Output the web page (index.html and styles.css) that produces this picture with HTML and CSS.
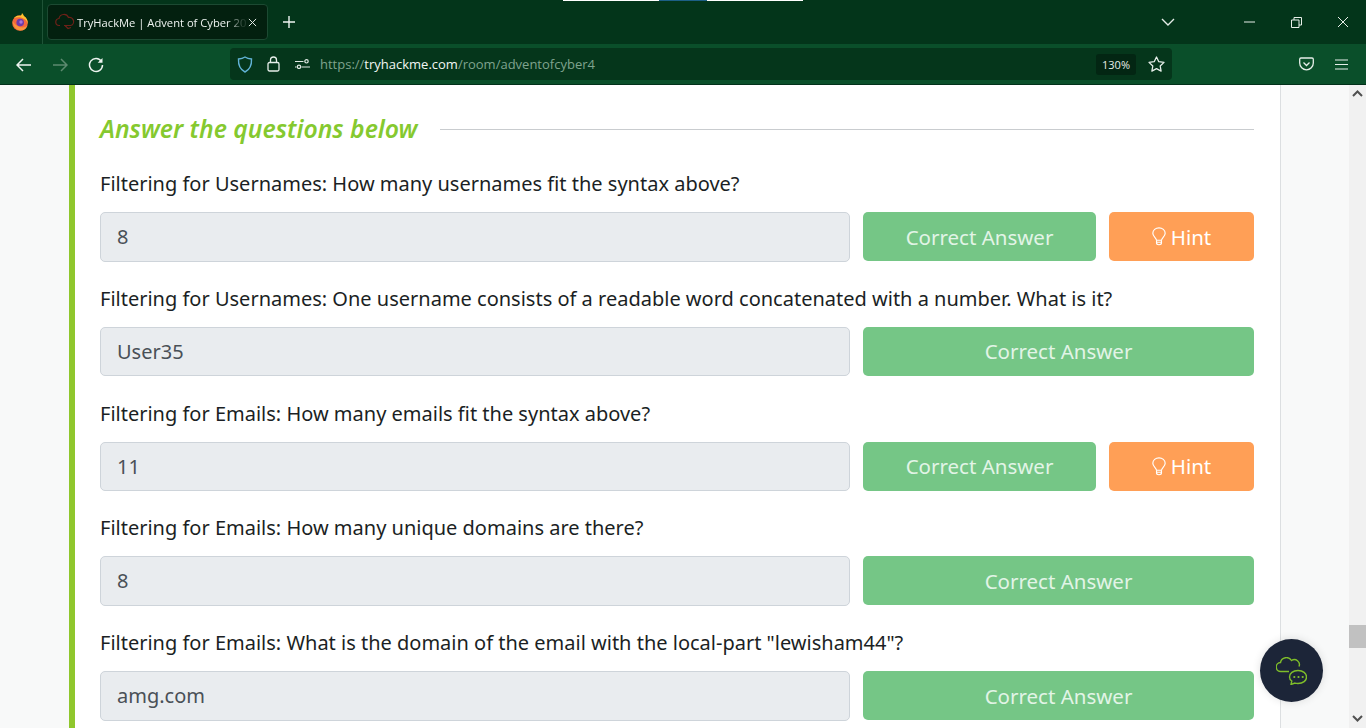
FILE: index.html
```html
<!DOCTYPE html>
<html lang="en">
<head>
    <meta charset="UTF-8">
    <title>TryHackMe | Advent of Cyber 2022</title>
    <link rel="stylesheet" href="styles.css">
</head>
<body>

<div class="top-strip"><span class="strip-white"></span><span class="strip-blue"></span><span class="strip-white"></span></div>

<header class="tabbar">
    <div class="app-menu">
        <svg width="16" height="18" viewBox="0 0 16 18">
            <circle cx="8" cy="10" r="7.800" fill="#f4683c"/>
            <path d="M.5 8c.5 5 4 9.500 8 9.500 3.500 0 6-2 7-5-2 2-5 2.500-8 1.500C5 13 2 11 .5 8z" fill="#f8963a"/>
            <path d="M2 5C4 2.500 7 2.500 8.500 3 9.500 2 10 1 10 0c1 1 1.500 2 2 3 2.500 1.500 4 4.500 3.800 8-.8-3-2.500-5-4.500-5.500C9 4 5 4 2 5z" fill="#ffc02e"/>
            <circle cx="8.200" cy="9.500" r="3.800" fill="#6d3aa8"/>
            <circle cx="9" cy="9" r="1.700" fill="#a878d8"/>
        </svg>
    </div>
    <div class="tab">
        <svg class="tab-icon" width="20" height="18" viewBox="0 0 20 18" fill="none" stroke="#6e2118" stroke-width="1.200">
            <path d="M5 12.500H4.500a3.500 3.500 0 0 1-.5-7 5 5 0 0 1 9.500-1 4 4 0 0 1 2 8H9"/>
            <path d="M10 12.500l3 3 3-1"/>
        </svg>
        <span class="tab-title">TryHackMe | Advent of Cyber 20</span>
        <svg class="tab-close" width="9" height="9" viewBox="0 0 10 10" stroke="#e4ece7" stroke-width="1.100"><path d="M1 1l8 8M9 1L1 9"/></svg>
    </div>
    <svg class="new-tab" width="14" height="14" viewBox="0 0 14 14" stroke="#f0f5f2" stroke-width="1.400"><path d="M7 1v12M1 7h12"/></svg>
    <div class="tabbar-right">
        <svg class="all-tabs" width="14" height="8" viewBox="0 0 14 8" fill="none" stroke="#e4ece7" stroke-width="1.400"><path d="M1 1l6 6 6-6"/></svg>
        <svg class="win-min" width="11" height="2" viewBox="0 0 11 2" stroke="#e8efe9" stroke-width="1"><path d="M0 1h11"/></svg>
        <svg class="win-max" width="11" height="11" viewBox="0 0 11 11" fill="none" stroke="#e8efe9" stroke-width="1"><path d="M.5 3h7.500v7.500H.5zM3 3V.5h7.500V8H8"/></svg>
        <svg class="win-close" width="12" height="12" viewBox="0 0 12 12" stroke="#e8efe9" stroke-width="1"><path d="M1 1l10 10M11 1L1 11"/></svg>
    </div>
</header>

<nav class="toolbar">
    <svg class="nav-back" width="16" height="14" viewBox="0 0 16 14" fill="none" stroke="#eef4f0" stroke-width="1.500"><path d="M15 7H1.500M7 1L1 7l6 6"/></svg>
    <svg class="nav-forward" width="16" height="14" viewBox="0 0 16 14" fill="none" stroke="#5d8a70" stroke-width="1.500"><path d="M1 7h13.500M9 1l6 6-6 6"/></svg>
    <svg class="nav-reload" width="16" height="16" viewBox="0 0 16 16" fill="none" stroke="#eef4f0" stroke-width="1.500"><path d="M13.500 4.500A6.500 6.500 0 1 0 14.500 8"/><path d="M14.500 1L14.500 5.800 9.700 5.800z" fill="#eef4f0" stroke="none"/></svg>
    <div class="urlbar">
        <svg class="url-shield" width="16" height="17" viewBox="0 0 16 17" fill="none" stroke="#62b3d6" stroke-width="1.400"><path d="M8 1c2 1.300 4 1.800 6.500 2 .3 6-1.500 10.500-6.500 13C3 13.500 1.200 9 1.500 3 4 2.800 6 2.300 8 1z"/></svg>
        <svg class="url-lock" width="13" height="16" viewBox="0 0 13 16" fill="none" stroke="#e6eee9" stroke-width="1.300"><rect x="1" y="6.500" width="11" height="8.500" rx="1.500"/><path d="M3.500 6.500V4a3 3 0 0 1 6 0v2.500"/></svg>
        <svg class="url-perm" width="15" height="10" viewBox="0 0 15 10" fill="none" stroke="#dfe8e3" stroke-width="1.200"><path d="M0 2.500h8.500M0 8h1.500M6.500 8H15"/><circle cx="11.500" cy="2.300" r="1.700"/><circle cx="4" cy="7.800" r="1.700"/></svg>
        <div class="url-text">https://<b>tryhackme.com</b>/room/adventofcyber4</div>
        <span class="zoom-level">130%</span>
        <svg class="url-star" width="17" height="16" viewBox="0 0 17 16" fill="none" stroke="#e6eee9" stroke-width="1.300"><path d="M8.500 1l2.300 4.700 5.200.7-3.800 3.600.9 5.100-4.600-2.400-4.600 2.400.9-5.100L1 6.400l5.200-.7z" stroke-linejoin="round"/></svg>
    </div>
    <div class="toolbar-right">
        <svg width="15" height="14" viewBox="0 0 15 14" fill="none" stroke="#e6eee9" stroke-width="1.300"><path d="M2 1h11a1.300 1.300 0 0 1 1.300 1.300V6A6.800 6.800 0 0 1 .7 6V2.300A1.300 1.300 0 0 1 2 1z"/><path d="M4.500 5.500l3 3 3-3"/></svg>
        <svg width="13" height="11" viewBox="0 0 13 11" stroke="#e6eee9" stroke-width="1.200"><path d="M0 1h13M0 5.500h13M0 10h13"/></svg>
    </div>
</nav>

<main class="viewport">
    <div class="page">
        <section class="card">
            <div class="card-heading">
                <h2>Answer the questions below</h2>
                <span class="heading-rule"></span>
            </div>

            <div class="question">
                <p>Filtering for Usernames: How many usernames fit the syntax above?</p>
                <div class="answer-row">
                    <div class="answer-input">8</div>
                    <div class="btn btn-correct">Correct Answer</div>
                    <div class="btn btn-hint">
                        <svg width="14" height="19" viewBox="0 0 17 22" fill="none" stroke="#fff" stroke-width="1.400"><path d="M5.500 15.500C4.800 12.500 1 11 1 7a7.500 6.500 0 0 1 15 0c0 4-3.800 5.500-4.500 8.500z"/><path d="M5.500 15.500v3.500c0 1 1 2 3 2s3-1 3-2v-3.500M5.500 18h6"/></svg>
                        Hint
                    </div>
                </div>
            </div>

            <div class="question">
                <p>Filtering for Usernames: One username consists of a readable word concatenated with a number. What is it?</p>
                <div class="answer-row">
                    <div class="answer-input">User35</div>
                    <div class="btn btn-correct btn-wide">Correct Answer</div>
                </div>
            </div>

            <div class="question">
                <p>Filtering for Emails: How many emails fit the syntax above?</p>
                <div class="answer-row">
                    <div class="answer-input">11</div>
                    <div class="btn btn-correct">Correct Answer</div>
                    <div class="btn btn-hint">
                        <svg width="14" height="19" viewBox="0 0 17 22" fill="none" stroke="#fff" stroke-width="1.400"><path d="M5.500 15.500C4.800 12.500 1 11 1 7a7.500 6.500 0 0 1 15 0c0 4-3.800 5.500-4.500 8.500z"/><path d="M5.500 15.500v3.500c0 1 1 2 3 2s3-1 3-2v-3.500M5.500 18h6"/></svg>
                        Hint
                    </div>
                </div>
            </div>

            <div class="question">
                <p>Filtering for Emails: How many unique domains are there?</p>
                <div class="answer-row">
                    <div class="answer-input">8</div>
                    <div class="btn btn-correct btn-wide">Correct Answer</div>
                </div>
            </div>

            <div class="question">
                <p>Filtering for Emails: What is the domain of the email with the local-part "lewisham44"?</p>
                <div class="answer-row">
                    <div class="answer-input">amg.com</div>
                    <div class="btn btn-correct btn-wide">Correct Answer</div>
                </div>
            </div>
        </section>
    </div>

    <div class="scrollbar">
        <svg width="11" height="7" viewBox="0 0 11 7" fill="none" stroke="#505050" stroke-width="2"><path d="M1 6l4.500-4.500L10 6"/></svg>
        <span class="scroll-thumb"></span>
        <svg width="11" height="7" viewBox="0 0 11 7" fill="none" stroke="#505050" stroke-width="2"><path d="M1 1l4.500 4.500L10 1"/></svg>
    </div>

    <div class="chat-button">
        <svg width="31" height="28" viewBox="0 0 31 28" fill="none" stroke="#7fbe2a" stroke-width="1.400">
            <path d="M13 14.500H5A4.500 4.500 0 0 1 4.500 5.500 6 6 0 0 1 15.500 3.500 5 5 0 0 1 23 9.500"/>
            <path d="M22 13.500c5 0 8.500 2.800 8.500 6.500s-3.500 6.500-8.500 6.500c-1 0-2-.1-3-.4l-4 1.400.8-3.500c-1.600-1-2.300-2.400-2.300-4 0-3.700 3.500-6.500 8.500-6.500z"/>
            <circle cx="18.300" cy="20" r="1.100" fill="#7fbe2a" stroke="none"/>
            <circle cx="22.500" cy="20" r="1.100" fill="#7fbe2a" stroke="none"/>
            <circle cx="26.700" cy="20" r="1.100" fill="#7fbe2a" stroke="none"/>
        </svg>
    </div>
</main>

</body>
</html>
```

FILE: styles.css
```css
html, body {
    margin: 0;
    padding: 0;
    height: 100%;
    overflow: hidden;
}
body {
    display: flex;
    flex-direction: column;
    height: 728px;
    font-family: "Noto Sans", sans-serif;
    background-color: #f8f9f9;
}
.top-strip {
    position: absolute;
    top: 0;
    left: 563px;
    display: flex;
    height: 1px;
}
.strip-white {
    width: 96px;
    background-color: #fff;
}
.strip-blue {
    width: 48px;
    background-color: #1c5f86;
}
.tabbar {
    display: flex;
    align-items: center;
    height: 44px;
    background-color: #03351a;
    flex-shrink: 0;
}
.app-menu {
    display: flex;
    align-items: center;
    justify-content: center;
    width: 43px;
    height: 44px;
    padding-right: 3px;
    box-sizing: border-box;
    border-right: 1px solid #1f5337;
}
.tab {
    display: flex;
    align-items: center;
    width: 221px;
    height: 36px;
    margin-left: 4px;
    padding: 0 10px 0 7px;
    box-sizing: border-box;
    background-color: #03200f;
    border: 1px solid #1c4a32;
    border-radius: 4px;
}
.tab-icon {
    flex-shrink: 0;
}
.tab-title {
    flex: 1;
    margin-left: 2px;
    white-space: nowrap;
    font-family: "Open Sans", sans-serif;
    font-size: 11.200px;
    color: #eef3f0;
    -webkit-mask-image: linear-gradient(to right, #000 88%, rgba(0, 0, 0, 0.15) 97%);
    mask-image: linear-gradient(to right, #000 88%, rgba(0, 0, 0, 0.15) 97%);
}
.tab-close {
    flex-shrink: 0;
}
.new-tab {
    margin-left: 14px;
}
.tabbar-right {
    display: flex;
    align-items: center;
    margin-left: auto;
    padding-right: 17px;
}
.all-tabs {
    margin-right: 69px;
}
.win-max {
    margin-left: 36px;
}
.win-close {
    margin-left: 35px;
}
.toolbar {
    display: flex;
    align-items: center;
    height: 40px;
    padding-left: 16px;
    background-color: #0a4f2a;
    border-bottom: 1px solid #02301a;
    flex-shrink: 0;
}
.nav-back, .nav-forward, .nav-reload {
    margin-top: 2px;
}
.nav-forward {
    margin-left: 20px;
}
.nav-reload {
    margin-left: 20px;
}
.urlbar {
    display: flex;
    align-items: center;
    width: 942px;
    height: 32px;
    margin-left: 126px;
    padding-left: 7px;
    box-sizing: border-box;
    background-color: #05361b;
    border-radius: 4px;
}
.url-lock {
    margin-left: 14px;
}
.url-perm {
    margin-left: 15px;
}
.url-text {
    flex: 1;
    margin-left: 10px;
    font-family: "Open Sans", sans-serif;
    font-size: 13px;
    color: #7fa38e;
}
.url-text b {
    font-weight: 400;
    color: #f2f6f3;
}
.zoom-level {
    padding: 3px 6px;
    margin-right: 12px;
    font-family: "Open Sans", sans-serif;
    font-size: 11px;
    color: #e6eee9;
    background-color: #032613;
    border-radius: 3px;
}
.url-star {
    margin-right: 7px;
}
.toolbar-right {
    display: flex;
    align-items: center;
    gap: 21px;
    margin-left: 127px;
}
.viewport {
    position: relative;
    display: flex;
    flex: 1;
    min-height: 0;
    overflow: hidden;
}
.page {
    flex: 1;
    padding-left: 69px;
}
.card {
    width: 1212px;
    height: 100%;
    padding: 0 26px 0 25px;
    box-sizing: border-box;
    background-color: #fff;
    border-left: 6px solid #8fc72d;
    border-right: 1px solid #dcdfe1;
}
.card-heading {
    display: flex;
    align-items: center;
    height: 90px;
    padding-bottom: 2px;
    box-sizing: border-box;
}
.card-heading h2 {
    margin: 0 0 2px;
    font-size: 24.700px;
    font-weight: 600;
    font-style: italic;
    color: #85c92f;
    white-space: nowrap;
}
.heading-rule {
    flex: 1;
    height: 1px;
    margin-left: 23px;
    background-color: #c9cccf;
}
.question {
    height: 114.800px;
}
.question p {
    margin: 0;
    height: 37px;
    line-height: 18px;
    font-size: 20px;
    color: #1b1f24;
    white-space: nowrap;
}
.answer-row {
    display: flex;
    gap: 13px;
}
.answer-input {
    width: 750px;
    height: 49.500px;
    padding-left: 16px;
    box-sizing: border-box;
    line-height: 48px;
    font-size: 20px;
    color: #495057;
    background-color: #e9ecef;
    border: 1px solid #ced4da;
    border-radius: 5px;
}
.btn {
    display: flex;
    align-items: center;
    justify-content: center;
    height: 49px;
    font-size: 20.500px;
    border-radius: 5px;
}
.btn-correct {
    width: 233px;
    color: #e2f4e6;
    background-color: #75c686;
}
.btn-wide {
    width: 391px;
}
.btn-hint {
    gap: 5px;
    width: 145px;
    color: #fff;
    background-color: #ff9f56;
}
.scrollbar {
    display: flex;
    flex-direction: column;
    align-items: center;
    position: relative;
    width: 17px;
    padding: 5px 0 6px;
    box-sizing: border-box;
    justify-content: space-between;
    background-color: #f1f1f1;
}
.scroll-thumb {
    position: absolute;
    top: 540px;
    left: 0;
    width: 17px;
    height: 23px;
    background-color: #c1c1c1;
}
.chat-button {
    position: absolute;
    left: 1260px;
    top: 554px;
    display: flex;
    align-items: center;
    justify-content: center;
    width: 63px;
    height: 63px;
    background-color: #1c2538;
    border-radius: 50%;
    box-shadow: 0 0 8px rgba(0, 0, 0, 0.12);
}
```
